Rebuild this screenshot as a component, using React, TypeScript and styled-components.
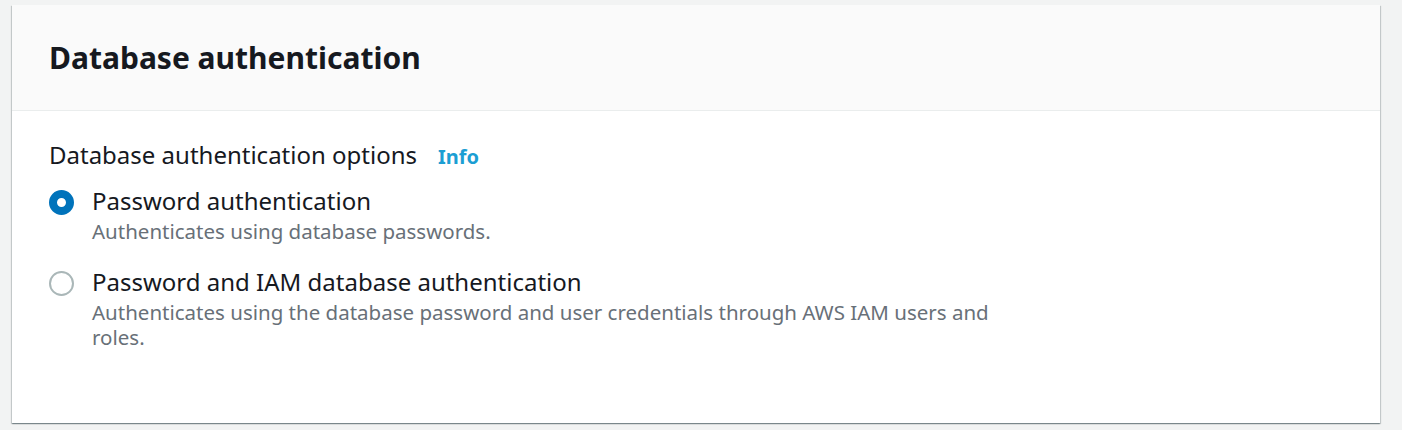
import React from "react";
import styled, { createGlobalStyle } from "styled-components";

const Global = createGlobalStyle`
  html, body { margin: 0; padding: 0; background: #f2f3f3; }
  body { font-family: "Noto Sans", "Open Sans", Arial, sans-serif; color: #16191f; }
  * { box-sizing: border-box; }
`;

const Page = styled.div`
  padding: 5px 22px 0 12px;
  height: 430px;
`;

const Card = styled.section`
  background: #ffffff;
  box-shadow: 0 1px 1px 0 rgba(0, 28, 36, 0.3), 1px 1px 1px 0 rgba(0, 28, 36, 0.15),
    -1px 1px 1px 0 rgba(0, 28, 36, 0.15);
  height: 418px;
  display: flex;
  flex-direction: column;
`;

const Header = styled.header`
  background: #fafafa;
  border-bottom: 1px solid #eaeded;
  height: 106px;
  display: flex;
  align-items: center;
  padding: 0 37px;
`;

const Title = styled.h2`
  margin: 0;
  font-size: 30px;
  font-weight: 700;
  line-height: 38px;
  padding-top: 1px;
`;

const Body = styled.div`
  padding: 29px 37px;
  display: flex;
  flex-direction: column;
`;

const LabelRow = styled.div`
  display: flex;
  align-items: baseline;
  gap: 21px;
  font-size: 24px;
  line-height: 30px;
  margin-bottom: 14px;
`;

const InfoLink = styled.a`
  color: #1b9ed3;
  font-weight: 700;
  font-size: 20px;
  text-decoration: none;
`;

const Options = styled.div`
  display: flex;
  flex-direction: column;
  gap: 23px;
`;

const Option = styled.label`
  display: grid;
  grid-template-columns: 25px 920px;
  column-gap: 18px;
  cursor: pointer;
`;

const Radio = styled.span<{ $checked?: boolean }>`
  width: 25px;
  height: 25px;
  margin-top: 3.5px;
  border-radius: 50%;
  border: ${(p) => (p.$checked ? "8px solid #0073bb" : "2px solid #aab7b8")};
  background: #fff;
`;

const OptionText = styled.div`
  display: flex;
  flex-direction: column;
`;

const OptionLabel = styled.span`
  font-size: 24px;
  line-height: 30px;
  color: #16191f;
`;

const OptionDesc = styled.span`
  font-size: 20.5px;
  line-height: 25px;
  margin-top: 3px;
  color: #687078;
`;

const options = [
  {
    label: "Password authentication",
    desc: "Authenticates using database passwords.",
    checked: true,
  },
  {
    label: "Password and IAM database authentication",
    desc: "Authenticates using the database password and user credentials through AWS IAM users and roles.",
    checked: false,
  },
];

export default function App() {
  return (
    <>
      <Global />
      <Page>
        <Card>
          <Header>
            <Title>Database authentication</Title>
          </Header>
          <Body>
            <LabelRow>
              <span>Database authentication options</span>
              <InfoLink href="#">Info</InfoLink>
            </LabelRow>
            <Options>
              {options.map((o) => (
                <Option key={o.label}>
                  <Radio $checked={o.checked} />
                  <OptionText>
                    <OptionLabel>{o.label}</OptionLabel>
                    <OptionDesc>{o.desc}</OptionDesc>
                  </OptionText>
                </Option>
              ))}
            </Options>
          </Body>
        </Card>
      </Page>
    </>
  );
}
